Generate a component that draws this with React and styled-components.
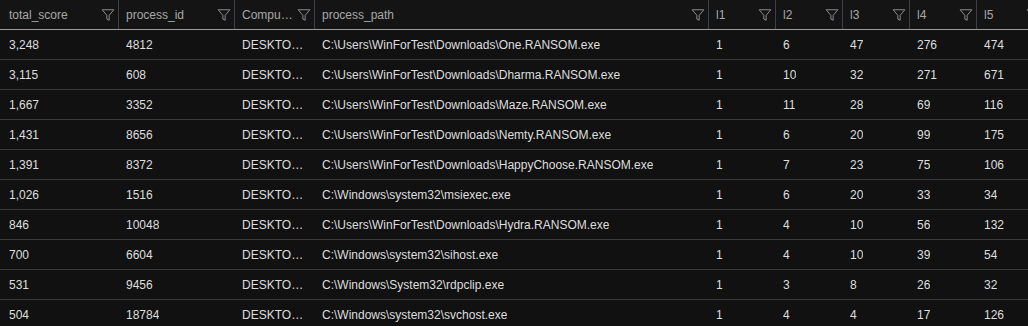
import React from "react";
import styled, { createGlobalStyle } from "styled-components";

const GlobalStyle = createGlobalStyle`
  html, body {
    margin: 0;
    padding: 0;
    background: #111111;
  }
  body {
    font-family: "Liberation Sans", Arial, sans-serif;
    font-size: 12px;
  }
`;

const COLUMNS = "118px 116px 80px 394px repeat(5, 67px)";

const Grid = styled.div`
  width: 1028px;
  height: 326px;
  overflow: hidden;
  background: #111111;
`;

const HeaderRow = styled.div`
  display: grid;
  grid-template-columns: ${COLUMNS};
  height: 29px;
  border-bottom: 1px solid #9a9a9a;
  background: #141414;
`;

const HeaderCell = styled.div`
  display: flex;
  align-items: center;
  min-width: 0;
  padding: 0 3px 0 ${(p) => (p.$first ? 9 : 7)}px;
  border-left: ${(p) => (p.$first ? "none" : "1px solid #3b4049")};
  color: #a8a8a8;
`;

const Label = styled.span`
  flex: 1;
  min-width: 0;
  white-space: nowrap;
  overflow: hidden;
  text-overflow: ellipsis;
`;

const FilterIcon = styled.svg`
  flex-shrink: 0;
  width: 14px;
  height: 14px;
  margin-left: 2px;
  fill: none;
  stroke: #9c9c9c;
  stroke-width: 1.5;
  stroke-linejoin: round;
`;

const Row = styled.div`
  display: grid;
  grid-template-columns: ${COLUMNS};
  height: 29px;
  border-bottom: 1px solid #3a3a3a;
`;

const Cell = styled.div`
  display: flex;
  align-items: center;
  min-width: 0;
  padding: 0 8px 0 ${(p) => (p.$first ? 9 : 7)}px;
  border-left: ${(p) => (p.$first ? "none" : "1px solid transparent")};
  color: #dedede;

  span {
    white-space: nowrap;
    overflow: hidden;
    text-overflow: ellipsis;
  }
`;

const headers = [
  "total_score",
  "process_id",
  "ComputerName",
  "process_path",
  "l1",
  "l2",
  "l3",
  "l4",
  "l5",
];

const PC = "DESKTOP-WINFORTEST";
const DL = "C:\\Users\\WinForTest\\Downloads\\";

const rows = [
  ["3,248", "4812", PC, DL + "One.RANSOM.exe", 1, 6, 47, 276, 474],
  ["3,115", "608", PC, DL + "Dharma.RANSOM.exe", 1, 10, 32, 271, 671],
  ["1,667", "3352", PC, DL + "Maze.RANSOM.exe", 1, 11, 28, 69, 116],
  ["1,431", "8656", PC, DL + "Nemty.RANSOM.exe", 1, 6, 20, 99, 175],
  ["1,391", "8372", PC, DL + "HappyChoose.RANSOM.exe", 1, 7, 23, 75, 106],
  ["1,026", "1516", PC, "C:\\Windows\\system32\\msiexec.exe", 1, 6, 20, 33, 34],
  ["846", "10048", PC, DL + "Hydra.RANSOM.exe", 1, 4, 10, 56, 132],
  ["700", "6604", PC, "C:\\Windows\\system32\\sihost.exe", 1, 4, 10, 39, 54],
  ["531", "9456", PC, "C:\\Windows\\System32\\rdpclip.exe", 1, 3, 8, 26, 32],
  ["504", "18784", PC, "C:\\Windows\\system32\\svchost.exe", 1, 4, 4, 17, 126],
];

const Funnel = () => (
  <FilterIcon viewBox="0 0 24 24">
    <polygon points="22 3 2 3 10 12.46 10 19 14 21 14 12.46 22 3" />
  </FilterIcon>
);

export default function App() {
  return (
    <>
      <GlobalStyle />
      <Grid>
        <HeaderRow>
          {headers.map((h, i) => (
            <HeaderCell key={h} $first={i === 0}>
              <Label>{h}</Label>
              <Funnel />
            </HeaderCell>
          ))}
        </HeaderRow>
        {rows.map((r, ri) => (
          <Row key={ri}>
            {r.map((v, ci) => (
              <Cell key={ci} $first={ci === 0}>
                <span>{v}</span>
              </Cell>
            ))}
          </Row>
        ))}
      </Grid>
    </>
  );
}
